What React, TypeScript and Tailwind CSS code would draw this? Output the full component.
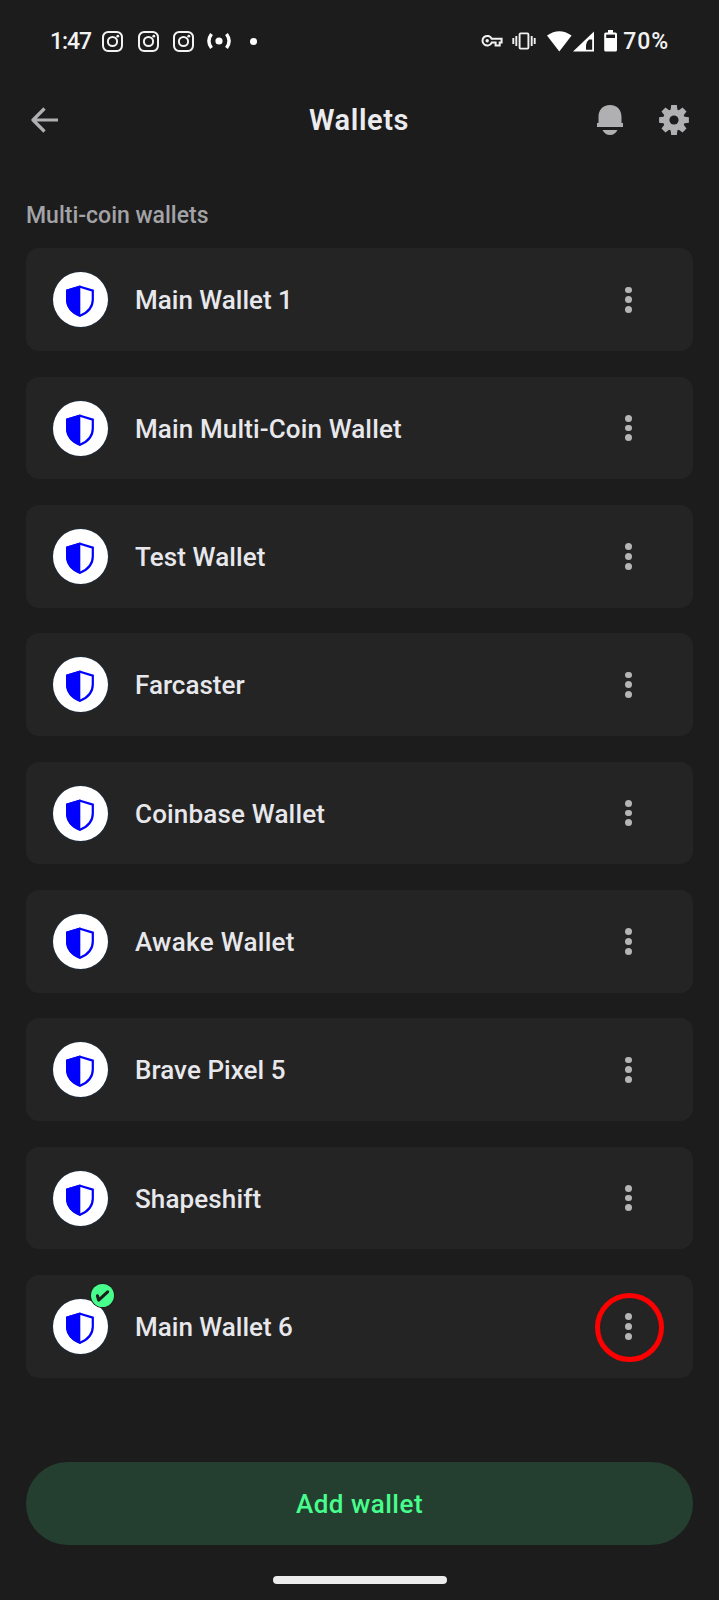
import clsx from 'clsx';

type Wallet = { name: string; tracking?: string; active?: boolean };

const wallets: Wallet[] = [
  { name: 'Main Wallet 1' },
  { name: 'Main Multi-Coin Wallet', tracking: 'tracking-[0.13px]' },
  { name: 'Test Wallet', tracking: 'tracking-[0.1px]' },
  { name: 'Farcaster' },
  { name: 'Coinbase Wallet', tracking: 'tracking-[0.17px]' },
  { name: 'Awake Wallet', tracking: 'tracking-[0.3px]' },
  { name: 'Brave Pixel 5', tracking: 'tracking-[0.05px]' },
  { name: 'Shapeshift', tracking: 'tracking-[0.12px]' },
  { name: 'Main Wallet 6', active: true },
];

const gearTeeth = [0, 45, 90, 135, 180, 225, 270, 315];

function CameraIcon() {
  return (
    <svg width="21" height="21" viewBox="0 0 21 21" fill="none" stroke="#f2f2f2" strokeWidth="2">
      <rect x="1" y="1" width="19" height="19" rx="5.2" />
      <circle cx="10.5" cy="10.5" r="4.6" />
      <circle cx="15.8" cy="5.2" r="1.4" fill="#f2f2f2" stroke="none" />
    </svg>
  );
}

function StatusBar() {
  return (
    <div className="flex h-[82px] items-center justify-between px-[50px] text-[23px] font-medium leading-none text-[#f2f2f2]">
      <div className="flex items-center">
        <span className="w-[52px] tracking-[-1.1px]">1:47</span>
        <div className="flex gap-[14.5px]">
          <CameraIcon />
          <CameraIcon />
          <CameraIcon />
        </div>
        <svg className="ml-3" width="26" height="18" viewBox="0 0 26 18" fill="none">
          <path d="M5.5 2Q.3 9 5.5 16M20.5 2q5.2 7 0 14" stroke="#fff" strokeWidth="3.4" />
          <circle cx="13" cy="9" r="3.6" fill="#fff" />
        </svg>
        <span className="ml-[18px] size-[7px] rounded-full bg-white" />
      </div>
      <div className="flex items-center">
        <svg width="22" height="14" viewBox="0 0 22 14" fill="none" stroke="#f2f2f2" strokeWidth="2">
          <path d="M10.7 4.8H20.6V8.6H18.7V11.6H14.6V8.6H10.7A4.8 4.8 0 1 1 10.7 4.8Z" />
          <circle cx="6.2" cy="6.7" r="1.7" fill="#f2f2f2" stroke="none" />
        </svg>
        <svg className="ml-[9px]" width="24" height="18" viewBox="0 0 24 18" fill="none" stroke="#f2f2f2" strokeWidth="1.9">
          <rect x="7.6" y="1.4" width="8.8" height="15.2" rx="1" />
          <path d="M4.3 4v10M1.3 6v6M19.7 4v10M22.7 6v6" />
        </svg>
        <svg className="ml-[11px]" width="48" height="21" viewBox="0 0 48 21">
          <path d="M12.3 20.5 0 4.6Q12.3-4.2 24.6 4.6Z" fill="#fff" />
          <path d="M47 .5V20.5H26Z" fill="#fff" />
          <path d="M45.2 8.5V18.8H39V14.2Q39 11 42 8.5Z" fill="#1c1c1c" />
        </svg>
        <svg className="ml-[9px]" width="14" height="22" viewBox="0 0 14 22">
          <path d="M4 0h5v2.5h2.4a1.6 1.6 0 0 1 1.6 1.6v15.8a1.6 1.6 0 0 1-1.6 1.6H1.8A1.6 1.6 0 0 1 .2 19.9V4.1A1.6 1.6 0 0 1 1.8 2.5H4Z" fill="#fff" />
          <path d="M2.2 4.6h8.8v3.4h-8.8z" fill="#1c1c1c" />
        </svg>
        <span className="ml-[5px] tracking-[0.9px]">70%</span>
      </div>
    </div>
  );
}

function Header() {
  return (
    <header className="flex h-[75px] items-center pl-8 pr-[30px]">
      <svg className="-ml-px mr-px" width="27" height="28" viewBox="0 0 27 28" fill="none" stroke="#b0b0b2" strokeWidth="3.2">
        <path d="M27 14H2.5M13.5 2.5 2 14l11.5 11.5" strokeLinejoin="round" />
      </svg>
      <h1 className="ml-[250px] pt-0.5 text-[29px] font-semibold leading-none tracking-[0.6px] text-[#ececef]">Wallets</h1>
      <div className="ml-auto flex gap-9">
        <svg width="26" height="30" viewBox="0 0 26 30" fill="#b0b0b2">
          <path d="M13 0C5.5 0 1.5 5 1.5 12v6H0v4h26v-4h-1.5V12C24.5 5 20.5 0 13 0ZM5.5 25h15Q18 30 13 30T5.5 25Z" />
        </svg>
        <svg width="30" height="30" viewBox="-15 -15 30 30" fill="#b0b0b2">
          <circle r="10.8" />
          {gearTeeth.map((a) => (
            <path key={a} d="M-2.8-14.9h5.6L3.6-9h-7.2Z" transform={`rotate(${a})`} />
          ))}
          <circle r="4.6" fill="#1c1c1c" />
        </svg>
      </div>
    </header>
  );
}

function WalletRow({ name, tracking, active }: Wallet) {
  return (
    <li className="flex h-[102.7px] items-center rounded-[13px] bg-[#242424] pl-[26.5px] pr-[61px]">
      <div className="relative size-[55px] rounded-full bg-white shadow-[0_0_0_1px_#1f2a38]">
        <svg className="ml-[12.5px] mt-[13px]" width="30" height="33" viewBox="0 0 29 33">
          <path d="M14.5 1.7 27.3 5.6V14.5Q27.3 25.5 14.5 30.8 1.7 25.5 1.7 14.5V5.6Z" fill="#fff" stroke="#00f" strokeWidth="2.2" />
          <path d="M14.8.6.5 4.8V14.5Q.5 26 14.8 32Z" fill="#00f" />
        </svg>
        {active && (
          <span className="absolute -top-[14.5px] left-[38px] size-[23px] rounded-full bg-[#47fd8c] shadow-[0_0_0_1px_#1c1c1c]">
            <svg width="23" height="23" viewBox="0 0 24 24" fill="none" stroke="#1c1c1c" strokeWidth="3.2" strokeLinecap="round" strokeLinejoin="round">
              <path d="M6.7 12.3 8 16.8 17.4 8.2" />
            </svg>
          </span>
        )}
      </div>
      <span className={clsx('ml-[27.5px] pt-0.5 text-[26px] font-medium text-[#e8e8ec]', tracking)}>{name}</span>
      <div className="relative ml-auto flex flex-col gap-[3px]">
        <i className="size-[6.8px] rounded-full bg-[#b5b5b5]" />
        <i className="size-[6.8px] rounded-full bg-[#b5b5b5]" />
        <i className="size-[6.8px] rounded-full bg-[#b5b5b5]" />
        {active && (
          <span className="absolute -left-[30px] -top-[20px] size-[69px] rounded-full border-[5px] border-[#f00]" />
        )}
      </div>
    </li>
  );
}

export default function App() {
  return (
    <main className="flex h-[1600px] w-[719px] flex-col overflow-hidden bg-[#1c1c1c] font-['Roboto','Noto_Sans',sans-serif]">
      <StatusBar />
      <Header />
      <h2 className="mt-[44px] pl-[26px] text-[23px] font-medium leading-[30px] text-[#a3a3a7]">Multi-coin wallets</h2>
      <ul className="mx-[26px] mt-[17.4px] flex flex-col gap-[25.65px]">
        {wallets.map((w) => (
          <WalletRow key={w.name} {...w} />
        ))}
      </ul>
      <button className="mx-[26px] mt-[84.5px] h-[83px] shrink-0 rounded-full bg-[#243f2f] pt-0.5 text-[26px] font-medium tracking-[0.5px] text-[#47fd8c]">
        Add wallet
      </button>
      <div className="mx-auto mt-[31px] h-[8px] w-[174px] shrink-0 rounded-full bg-[#ececec]" />
    </main>
  );
}
